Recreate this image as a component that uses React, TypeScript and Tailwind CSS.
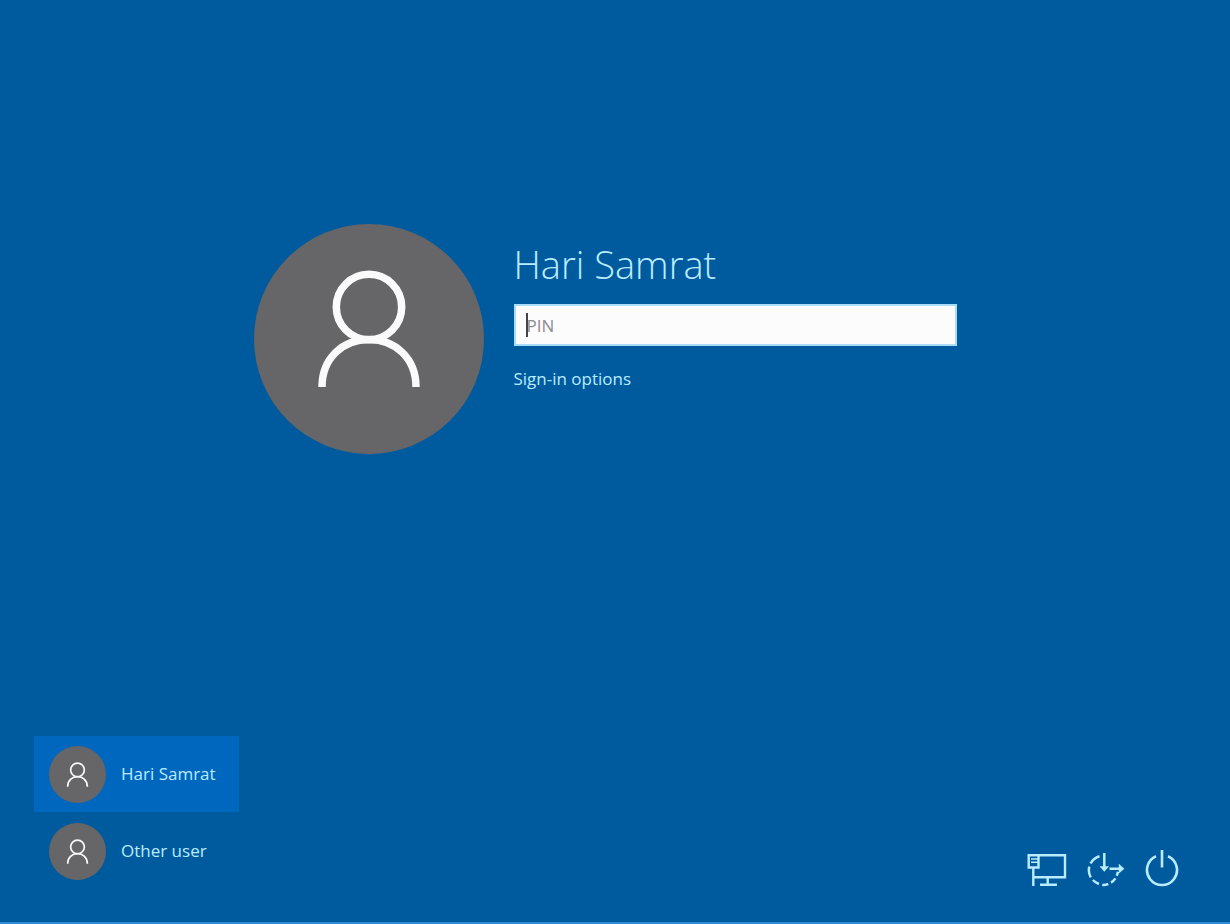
import React from "react";

function PersonIcon({ viewBox, stroke }: { viewBox: string; stroke: number }) {
  return (
    <svg viewBox={viewBox} className="size-full" fill="none" stroke="#fafafa" strokeWidth={stroke} aria-hidden="true">
      <circle cx="115" cy="83" r="32.7" />
      <path d="M68 163C68 134 89 115.5 115 115.5S162 134 162 163" />
    </svg>
  );
}

function NetworkIcon() {
  return (
    <svg viewBox="0 0 40 34" className="h-[34px] w-10" fill="none" stroke="currentColor" strokeWidth="2.4" aria-hidden="true">
      <path d="M12 2.3H38V24.3H6.3" />
      <path d="M1.7 2.3H11.5V14.5H1.7Z" />
      <path d="M4 6H11M4 9.3H11" strokeWidth="1.6" />
      <path d="M6.3 14.7V33M20.7 24.3V31.7M13 31.7H30" />
    </svg>
  );
}

function EaseOfAccessIcon() {
  return (
    <svg viewBox="0 0 38 34" className="h-[34px] w-[38px]" fill="none" stroke="currentColor" strokeWidth="2.5" aria-hidden="true">
      <path d="M12.5 3.2A14.6 14.6 0 0 0 3.6 10.5M2.3 13.6A14.6 14.6 0 0 0 3.8 24.3M5.9 27A14.6 14.6 0 0 0 12 31M15.2 31.9A14.6 14.6 0 0 0 21.3 31M24 29.6A14.6 14.6 0 0 0 28.4 25.4M29.7 22.8A14.6 14.6 0 0 0 30.9 18.8" />
      <path d="M17.3 0V15M22.5 15.7H34" />
      <path d="M12.5 13.2H22.1L17.3 18.8ZM31.8 10.8V20.6L37.4 15.7Z" fill="currentColor" stroke="none" />
    </svg>
  );
}

function PowerIcon() {
  return (
    <svg viewBox="0 0 34 38" className="h-[38px] w-[34px]" fill="none" stroke="currentColor" strokeWidth="2.6" aria-hidden="true">
      <path d="M11 7.3A15 15 0 1 0 23 7.3M17 1V18.5" />
    </svg>
  );
}

const users = [
  { name: "Hari Samrat", active: true },
  { name: "Other user", active: false },
];

export default function App() {
  return (
    <div className="flex min-h-screen flex-col border-b-2 border-[#2f8ad8] bg-[#005a9e] font-['Open_Sans','Noto_Sans',sans-serif] text-[#b9ecff]">
      <main className="flex justify-center gap-[30px] pt-56 pr-5">
        <div className="size-[230px] shrink-0 rounded-full bg-[#666567]">
          <PersonIcon viewBox="0 0 230 230" stroke={7.5} />
        </div>
        <form className="w-[443px]" onSubmit={(e) => e.preventDefault()}>
          <h1 className="pt-4 text-[38px] leading-[48px] font-light">Hari Samrat</h1>
          <div className="relative mt-4">
            <input
              type="password"
              aria-label="PIN"
              placeholder="PIN"
              className="block h-[42px] w-full border-2 border-[#a9dcf8] bg-[#fcfcfd] px-[11px] text-[17px] text-[#333] caret-transparent outline-none placeholder:text-[#8c8c8e] placeholder:opacity-100"
            />
            <span className="pointer-events-none absolute top-[9px] left-3 h-6 w-0.5 bg-[#444]" />
          </div>
          <a href="#options" className="mt-[21px] inline-block text-[17px] leading-6">Sign-in options</a>
        </form>
      </main>
      <footer className="mt-auto flex items-end justify-between pr-[51px] pb-[33px] pl-[34px]">
        <ul className="flex w-[205px] flex-col gap-px">
          {users.map((user) => (
            <li key={user.name}>
              <button
                type="button"
                className={`flex h-[76px] w-full items-center gap-[15px] pl-[15px] text-left text-[17px] ${user.active ? "bg-[#0067bf]" : ""}`}
              >
                <span className="size-[57px] rounded-full bg-[#666567]">
                  <PersonIcon viewBox="-21 -31 272 272" stroke={8} />
                </span>
                {user.name}
              </button>
            </li>
          ))}
        </ul>
        <div className="flex items-end gap-5 pb-0.5">
          <button type="button" aria-label="Network"><NetworkIcon /></button>
          <button type="button" aria-label="Ease of access"><EaseOfAccessIcon /></button>
          <button type="button" aria-label="Power"><PowerIcon /></button>
        </div>
      </footer>
    </div>
  );
}
